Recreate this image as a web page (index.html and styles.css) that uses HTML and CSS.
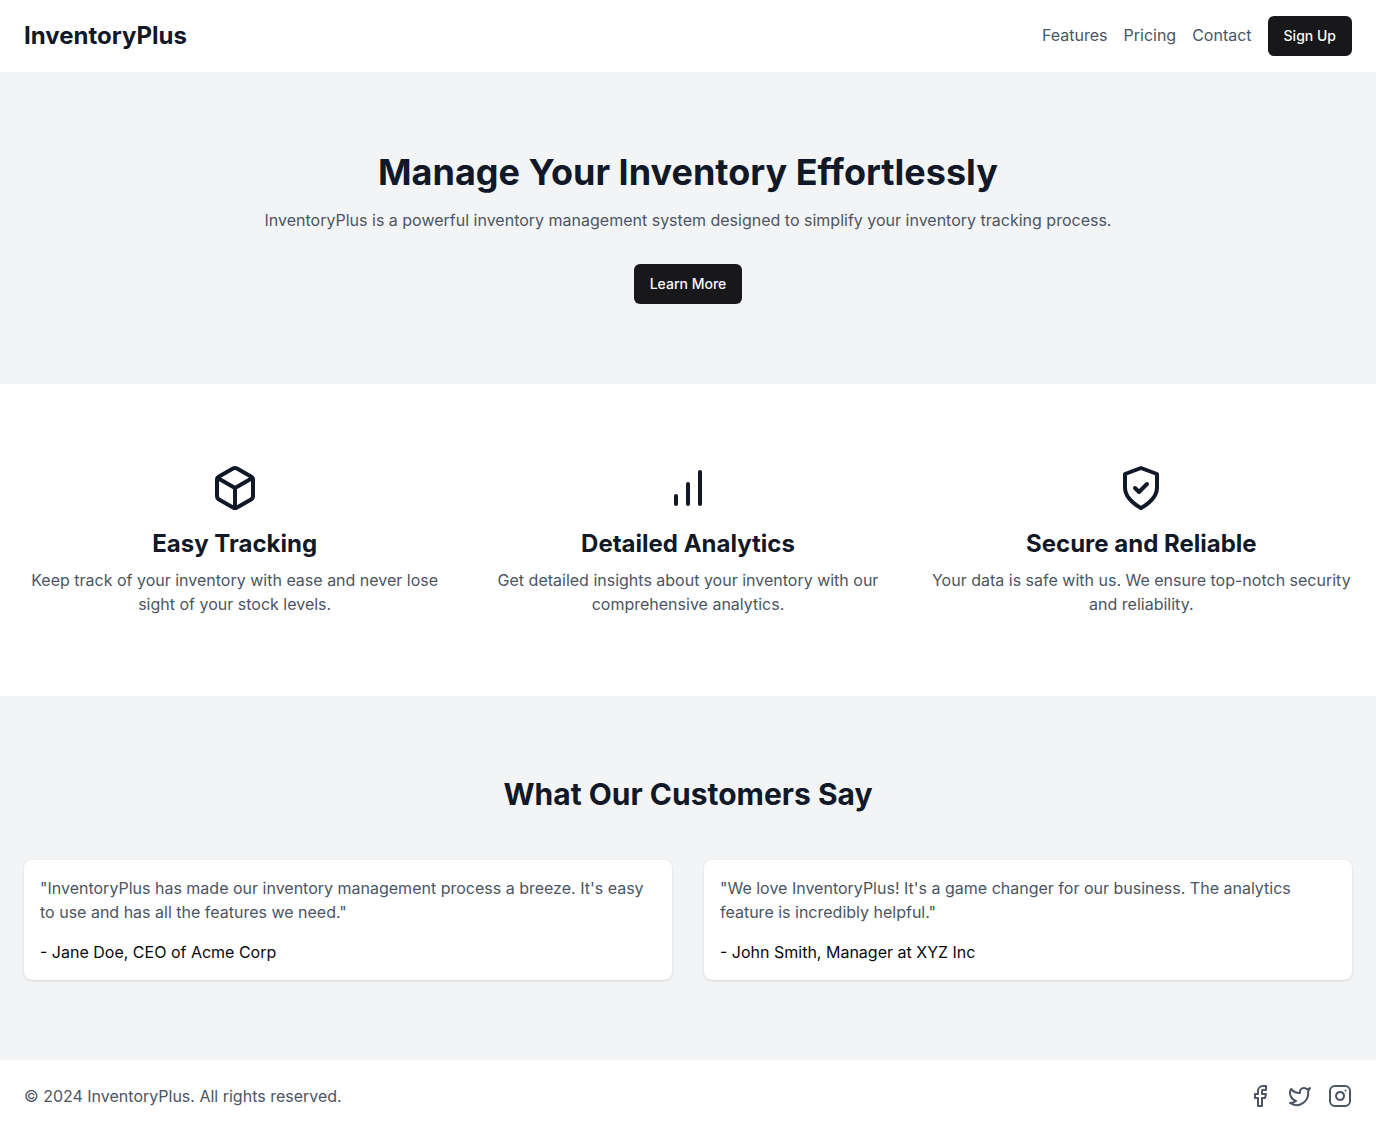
FILE: index.html
```html
<!DOCTYPE html>
<html lang="en">
<head>
  <meta charset="utf-8">
  <meta name="viewport" content="width=device-width, initial-scale=1">
  <title>InventoryPlus</title>
  <link rel="stylesheet" href="styles.css">
</head>
<body>
  <header class="site-header">
    <a class="brand" href="#">InventoryPlus</a>
    <nav class="site-nav">
      <a href="#features">Features</a>
      <a href="#pricing">Pricing</a>
      <a href="#contact">Contact</a>
      <button class="button" type="button">Sign Up</button>
    </nav>
  </header>

  <main>
    <section class="hero">
      <h1>Manage Your Inventory Effortlessly</h1>
      <p>InventoryPlus is a powerful inventory management system designed to simplify your inventory tracking process.</p>
      <button class="button" type="button">Learn More</button>
    </section>

    <section class="features" id="features">
      <article class="feature">
        <svg class="feature-icon" viewBox="0 0 24 24" aria-hidden="true">
          <path d="M21 8a2 2 0 0 0-1-1.730l-7-4a2 2 0 0 0-2 0l-7 4A2 2 0 0 0 3 8v8a2 2 0 0 0 1 1.730l7 4a2 2 0 0 0 2 0l7-4A2 2 0 0 0 21 16Z"/>
          <path d="m3.300 7 8.700 5 8.700-5"/>
          <path d="M12 22V12"/>
        </svg>
        <h2>Easy Tracking</h2>
        <p>Keep track of your inventory with ease and never lose sight of your stock levels.</p>
      </article>
      <article class="feature">
        <svg class="feature-icon" viewBox="0 0 24 24" aria-hidden="true">
          <path d="M12 20V10"/>
          <path d="M18 20V4"/>
          <path d="M6 20v-4"/>
        </svg>
        <h2>Detailed Analytics</h2>
        <p>Get detailed insights about your inventory with our comprehensive analytics.</p>
      </article>
      <article class="feature">
        <svg class="feature-icon" viewBox="0 0 24 24" aria-hidden="true">
          <path d="M12 22s8-4 8-10V5l-8-3-8 3v7c0 6 8 10 8 10"/>
          <path d="m9 12 2 2 4-4"/>
        </svg>
        <h2>Secure and Reliable</h2>
        <p>Your data is safe with us. We ensure top-notch security and reliability.</p>
      </article>
    </section>

    <section class="testimonials">
      <h2>What Our Customers Say</h2>
      <div class="quotes">
        <figure class="quote">
          <blockquote>"InventoryPlus has made our inventory management process a breeze. It's easy to use and has all the features we need."</blockquote>
          <figcaption>- Jane Doe, CEO of Acme Corp</figcaption>
        </figure>
        <figure class="quote">
          <blockquote>"We love InventoryPlus! It's a game changer for our business. The analytics feature is incredibly helpful."</blockquote>
          <figcaption>- John Smith, Manager at XYZ Inc</figcaption>
        </figure>
      </div>
    </section>
  </main>

  <footer class="site-footer">
    <p>© 2024 InventoryPlus. All rights reserved.</p>
    <div class="social">
      <a href="#facebook" aria-label="Facebook">
        <svg viewBox="0 0 24 24" aria-hidden="true">
          <path d="M18 2h-3a5 5 0 0 0-5 5v3H7v4h3v8h4v-8h3l1-4h-4V7a1 1 0 0 1 1-1h3z"/>
        </svg>
      </a>
      <a href="#twitter" aria-label="Twitter">
        <svg viewBox="0 0 24 24" aria-hidden="true">
          <path d="M22 4s-.7 2.100-2 3.400c1.600 10-9.400 17.300-18 11.600 2.200.1 4.400-.6 6-2C3 15.500.5 9.600 3 5c2.200 2.600 5.600 4.100 9 4-.9-4.200 4-6.600 7-3.800 1.100 0 3-1.200 3-1.200z"/>
        </svg>
      </a>
      <a href="#instagram" aria-label="Instagram">
        <svg viewBox="0 0 24 24" aria-hidden="true">
          <rect width="20" height="20" x="2" y="2" rx="5"/>
          <path d="M16 11.370A4 4 0 1 1 12.630 8 4 4 0 0 1 16 11.370z"/>
          <path d="M17.500 6.500h.01"/>
        </svg>
      </a>
    </div>
  </footer>
</body>
</html>
```

FILE: styles.css
```css
*,
*::before,
*::after {
  box-sizing: border-box;
}

body,
h1,
h2,
p,
figure,
blockquote {
  margin: 0;
}

body {
  background: #fff;
  color: #4b5563;
  font-family: Inter, "Liberation Sans", sans-serif;
  font-size: 16px;
  line-height: 24px;
}

a {
  color: inherit;
  text-decoration: none;
}

h1,
h2 {
  color: #111827;
  font-weight: 700;
}

svg {
  display: block;
  fill: none;
  stroke: currentColor;
  stroke-width: 2;
  stroke-linecap: round;
  stroke-linejoin: round;
}

.site-header {
  display: flex;
  align-items: center;
  justify-content: space-between;
  padding: 16px 24px;
}

.brand {
  color: #111827;
  font-size: 24px;
  font-weight: 700;
  line-height: 32px;
}

.site-nav {
  display: flex;
  align-items: baseline;
  gap: 16px;
}

.button {
  height: 40px;
  padding: 0 16px;
  border: 0;
  border-radius: 6px;
  background: #18181b;
  color: #fafafa;
  font: 500 14px/20px Inter, "Liberation Sans", sans-serif;
  cursor: pointer;
}

.hero {
  padding: 80px 24px;
  background: #f3f4f6;
  text-align: center;
}

.hero h1 {
  font-size: 36px;
  line-height: 40px;
}

.hero p {
  margin: 16px 0 32px;
}

.features {
  display: grid;
  grid-template-columns: repeat(3, 1fr);
  gap: 32px;
  padding: 80px 24px;
  text-align: center;
}

.feature-icon {
  width: 48px;
  height: 48px;
  margin: 0 auto 16px;
  color: #111827;
}

.feature h2 {
  margin-bottom: 8px;
  font-size: 24px;
  line-height: 32px;
}

.testimonials {
  padding: 80px 24px;
  background: #f3f4f6;
}

.testimonials h2 {
  margin-bottom: 48px;
  font-size: 30px;
  line-height: 36px;
  text-align: center;
}

.quotes {
  display: grid;
  grid-template-columns: repeat(2, 1fr);
  gap: 32px;
}

.quote {
  padding: 16px;
  border-radius: 8px;
  background: #fff;
  box-shadow: 0 1px 3px rgb(0 0 0 / 10%), 0 1px 2px -1px rgb(0 0 0 / 10%);
}

.quote figcaption {
  margin-top: 16px;
  color: #09090b;
}

.site-footer {
  display: flex;
  align-items: center;
  justify-content: space-between;
  padding: 24px;
}

.social {
  display: flex;
  gap: 16px;
}

.social svg {
  width: 24px;
  height: 24px;
}
```
